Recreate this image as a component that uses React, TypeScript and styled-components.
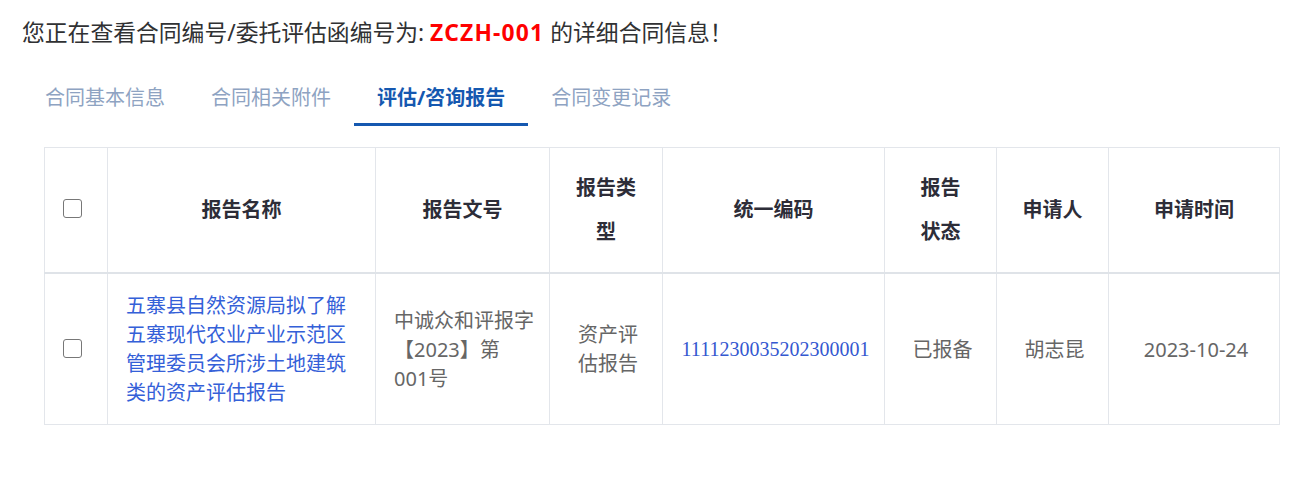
import React, { useState } from 'react';
import styled, { createGlobalStyle } from 'styled-components';

const GlobalStyle = createGlobalStyle`
  html, body {
    margin: 0;
    padding: 0;
    background: #ffffff;
  }
  body {
    font-family: "Noto Sans", "Noto Sans CJK SC", sans-serif;
    color: #333333;
  }
`;

const Page = styled.div`
  padding: 16px 22px 40px 22px;
`;

const Title = styled.div`
  font-size: 22.8px;
  line-height: 33px;
  color: #303133;
`;

const ContractNo = styled.span`
  color: #ff0000;
  font-weight: 700;
  letter-spacing: 1.2px;
`;

const Tabs = styled.div`
  display: flex;
  margin-top: 24px;
`;

const Tab = styled.div<{ $active?: boolean }>`
  height: 50px;
  line-height: 50px;
  padding: 0 23px;
  font-size: 20px;
  cursor: pointer;
  color: ${p => (p.$active ? '#1558b0' : '#8ea3c2')};
  font-weight: ${p => (p.$active ? 700 : 400)};
  border-bottom: 3px solid ${p => (p.$active ? '#1558b0' : 'transparent')};
`;

const TableWrap = styled.div`
  margin: 21px 0 0 22px;
`;

const Table = styled.table`
  width: 1235px;
  table-layout: fixed;
  border-collapse: collapse;
`;

const HeadCell = styled.th<{ $select?: boolean }>`
  height: 124px;
  padding: ${p => (p.$select ? '0 0 0 18px' : '0 12px')};
  border: 1px solid #e3e6eb;
  border-bottom: 2px solid #dfe3e8;
  font-size: 20px;
  line-height: 44px;
  font-weight: 700;
  color: #2d2d38;
  text-align: ${p => (p.$select ? 'left' : 'center')};
  vertical-align: middle;
`;

const BodyCell = styled.td<{ $align?: 'left' | 'center' }>`
  height: 150px;
  padding: 0 14px 0 18px;
  border: 1px solid #e3e6eb;
  font-size: 20px;
  line-height: 29px;
  color: #666666;
  text-align: ${p => p.$align || 'center'};
  vertical-align: middle;
`;

const Link = styled.a`
  color: #3460d8;
  text-decoration: none;
  cursor: pointer;
`;

const Code = styled.span`
  font-family: "Liberation Serif", "Times New Roman", serif;
  font-size: 20px;
  color: #3458d0;
`;

const Check = styled.span<{ $checked?: boolean }>`
  display: inline-block;
  box-sizing: border-box;
  width: 19px;
  height: 19px;
  margin-bottom: 6px;
  border: 1.5px solid #777777;
  border-radius: 3px;
  background: ${p => (p.$checked ? '#1558b0' : '#ffffff')};
  vertical-align: middle;
  cursor: pointer;
`;

const tabs = ['合同基本信息', '合同相关附件', '评估/咨询报告', '合同变更记录'];

const reports = [
  {
    id: 1,
    name: '五寨县自然资源局拟了解五寨现代农业产业示范区管理委员会所涉土地建筑类的资产评估报告',
    docNo: ['中诚众和评报字', '【2023】第', '001号'],
    type: ['资产评', '估报告'],
    code: '1111230035202300001',
    status: '已报备',
    applicant: '胡志昆',
    date: '2023-10-24',
  },
];

const lines = (parts: string[]) =>
  parts.map((part, i) => (
    <React.Fragment key={i}>
      {i > 0 && <br />}
      {part}
    </React.Fragment>
  ));

export default function App() {
  const [activeTab, setActiveTab] = useState(2);
  const [checked, setChecked] = useState<number[]>([]);

  const allChecked = checked.length === reports.length;

  const toggle = (id: number) => {
    setChecked(prev => (prev.includes(id) ? prev.filter(x => x !== id) : [...prev, id]));
  };

  return (
    <>
      <GlobalStyle />
      <Page>
        <Title>
          您正在查看合同编号/委托评估函编号为: <ContractNo>ZCZH-001</ContractNo> 的详细合同信息！
        </Title>

        <Tabs>
          {tabs.map((t, i) => (
            <Tab key={t} $active={i === activeTab} onClick={() => setActiveTab(i)}>
              {t}
            </Tab>
          ))}
        </Tabs>

        <TableWrap>
          <Table>
            <colgroup>
              <col style={{ width: 63 }} />
              <col style={{ width: 268 }} />
              <col style={{ width: 174 }} />
              <col style={{ width: 113 }} />
              <col style={{ width: 222 }} />
              <col style={{ width: 112 }} />
              <col style={{ width: 112 }} />
              <col style={{ width: 171 }} />
            </colgroup>
            <thead>
              <tr>
                <HeadCell $select>
                  <Check
                    $checked={allChecked}
                    onClick={() => setChecked(allChecked ? [] : reports.map(r => r.id))}
                  />
                </HeadCell>
                <HeadCell>报告名称</HeadCell>
                <HeadCell>报告文号</HeadCell>
                <HeadCell>{lines(['报告类', '型'])}</HeadCell>
                <HeadCell>统一编码</HeadCell>
                <HeadCell>{lines(['报告', '状态'])}</HeadCell>
                <HeadCell>申请人</HeadCell>
                <HeadCell>申请时间</HeadCell>
              </tr>
            </thead>
            <tbody>
              {reports.map(r => (
                <tr key={r.id}>
                  <BodyCell $align="left">
                    <Check $checked={checked.includes(r.id)} onClick={() => toggle(r.id)} />
                  </BodyCell>
                  <BodyCell $align="left">
                    <Link>{r.name}</Link>
                  </BodyCell>
                  <BodyCell $align="left">{lines(r.docNo)}</BodyCell>
                  <BodyCell>{lines(r.type)}</BodyCell>
                  <BodyCell>
                    <Code>{r.code}</Code>
                  </BodyCell>
                  <BodyCell>{r.status}</BodyCell>
                  <BodyCell>{r.applicant}</BodyCell>
                  <BodyCell>{r.date}</BodyCell>
                </tr>
              ))}
            </tbody>
          </Table>
        </TableWrap>
      </Page>
    </>
  );
}
